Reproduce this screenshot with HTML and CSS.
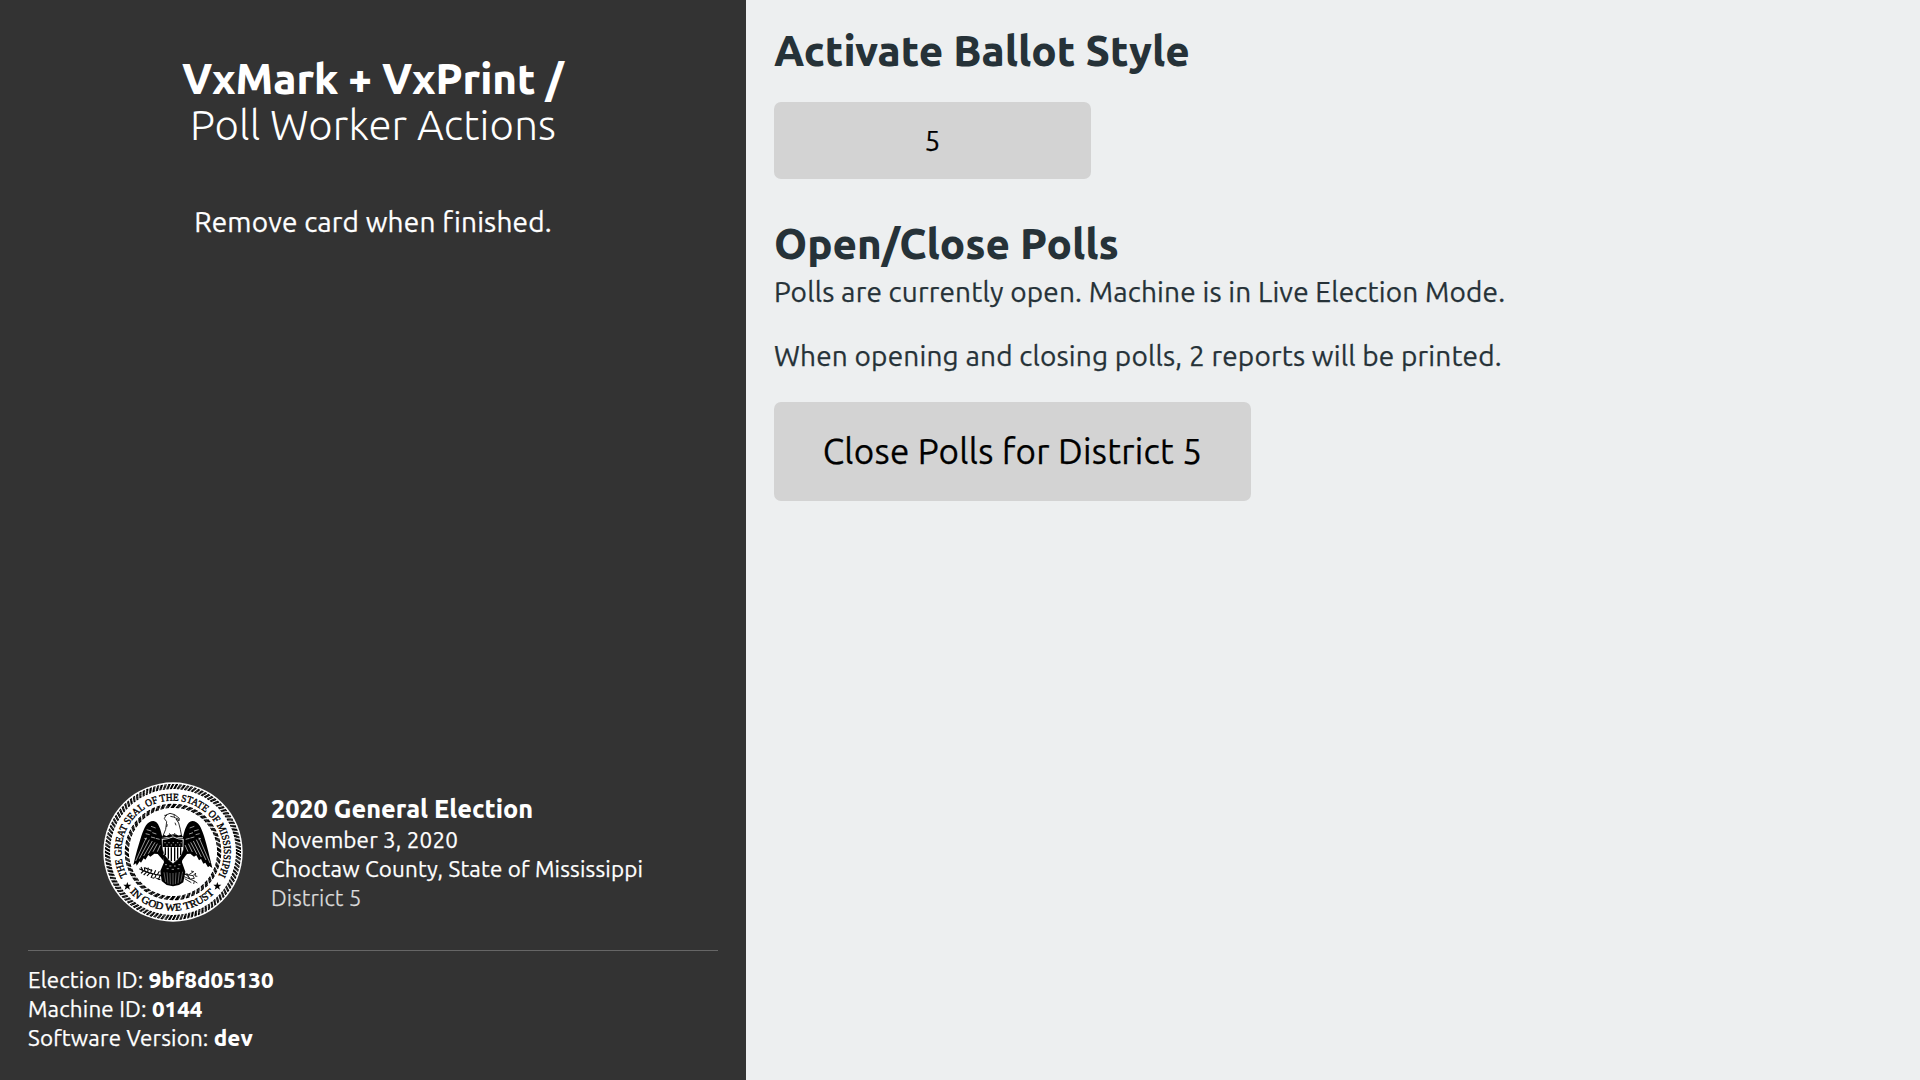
FILE: index.html
```
<!DOCTYPE html>
<html lang="en">
<head>
<meta charset="utf-8">
<title>VxMark + VxPrint</title>
<link rel="stylesheet" href="styles.css">
</head>
<body>
<div class="screen">
  <aside class="sidebar">
    <header class="intro">
      <h1 class="title">VxMark + VxPrint /<br><span class="light">Poll Worker Actions</span></h1>
      <p class="text">Remove card when finished.</p>
    </header>
    <footer class="footer">
      <section class="election">
        <svg class="seal" viewBox="24 21 420 420" role="img" aria-label="Seal of Mississippi">
          <defs>
            <path id="arc-top" d="M97 303A154 154 0 1 1 369 303"/>
            <path id="arc-bottom" d="M104 351A176 176 0 0 0 362 351"/>
          </defs>
          <circle cx="234" cy="231" r="209" fill="#fff"/>
          <g class="rope rope-outer">
            <circle cx="234" cy="231" r="190.500" pathLength="1120" stroke-dashoffset="0"/>
            <circle cx="234" cy="231" r="193.500" pathLength="1120" stroke-dashoffset="-1.500"/>
            <circle cx="234" cy="231" r="196.500" pathLength="1120" stroke-dashoffset="-3"/>
            <circle cx="234" cy="231" r="199.500" pathLength="1120" stroke-dashoffset="-4.500"/>
            <circle cx="234" cy="231" r="202.500" pathLength="1120" stroke-dashoffset="-6"/>
          </g>
          <g class="rope rope-inner">
            <circle cx="234" cy="231" r="134" pathLength="540" stroke-dashoffset="0"/>
            <circle cx="234" cy="231" r="137" pathLength="540" stroke-dashoffset="-1.500"/>
            <circle cx="234" cy="231" r="140" pathLength="540" stroke-dashoffset="-3"/>
            <circle cx="234" cy="231" r="143" pathLength="540" stroke-dashoffset="-4.500"/>
          </g>
          <text class="motto"><textPath href="#arc-top" textLength="632" lengthAdjust="spacingAndGlyphs">THE GREAT SEAL OF THE STATE OF MISSISSIPPI</textPath></text>
          <text class="motto"><textPath href="#arc-bottom" textLength="284" lengthAdjust="spacingAndGlyphs">IN GOD WE TRUST</textPath></text>
          <path d="M97 321l3 8 9 0-7 6 3 9-8-5-8 5 3-9-7-6 9 0z"/>
          <path d="M367 321l3 8 9 0-7 6 3 9-8-5-8 5 3-9-7-6 9 0z"/>
          <!-- wings -->
          <path d="M203 192C198 165 190 138 175 138C156 138 148 158 139 183C130 212 122 240 115 270L123 265L125 272L134 259L138 263L146 250L151 254L160 240L166 245L178 236L188 237L206 258Z"/>
          <path d="M263 192C268 165 277 138 292 138C310 138 319 158 327 183C336 212 344 246 352 279L343 273L339 277L331 263L325 266L318 252L312 256L304 241L297 245L286 236L276 237L260 258Z"/>
          <g class="feathers">
            <path d="M122 258L154 188M133 251L163 194M146 243L172 198M160 236L180 202M174 230L187 206M187 230L196 210"/>
            <path d="M345 264L312 188M333 255L304 194M319 246L295 198M306 238L287 202M292 231L280 206M279 230L270 210"/>
            <path d="M152 176l12 3M155 164l14 4M168 186l12 3M172 173l12 4M168 154l14 5M182 190l12 3M148 190l8 2"/>
            <path d="M314 176l-12 3M311 164l-14 4M298 186l-12 3M294 173l-12 4M298 154l-14 5M284 190l-12 3M318 190l-8 2"/>
          </g>
          <!-- head and neck -->
          <path class="outline" d="M202 188L212 163L215 140L208 131L213 120L225 115L239 119L253 130L252 138L243 132L251 144L256 163L260 185L234 179Z"/>
          <path class="line" d="M208 121l8 0M226 124l10 2M238 119l-1 8 15 6M217 148l-2 8M240 143l3 8M223 175l5 6M240 174l-4 7"/>
          <path d="M200 187l6-8 9 5 8-6 10 4 10-4 7 5 9-4 6 8z"/>
          <!-- body and tail -->
          <path d="M203 240L263 240L261 262L271 290L265 322L252 330L234 334L215 330L200 318L196 288L207 262Z"/>
          <path class="flecks" d="M210 269h6M223 273h6M237 273h5M250 269h6M215 281h6M230 283h7M247 281h6"/>
          <path class="tail" d="M207 292L212 321M216 292L219 326M225 294L226 328M234 294V329M243 293L241 327M253 291L249 325M263 290L257 320"/>
          <!-- shield -->
          <path class="shield" d="M199 191L216 190L234 183L251 190L267 191L266 223Q260 249 234 266Q208 249 202 223Z"/>
          <path d="M203 194L217 193L234 187L250 193L263 194L263 216H203Z"/>
          <path class="bars" d="M211 217V240M220 217V251M229 217V259M239 217V259M248 217V251M257 217V240"/>
          <path class="flecks" d="M208 203h4M220 203h4M233 203h4M246 203h4M257 203h3M214 210h4M227 210h4M240 210h4M252 210h4"/>
          <!-- branch and arrows -->
          <path class="branch" d="M133 281Q157 295 204 302M143 285l-5-9M150 289l-2-12M158 292l2-14M167 295l3-12M177 297l5-11M187 299l6-10M145 288l-7 7M154 292l-8 8M163 295l-7 8M173 298l-5 10M183 300l-4 10M195 302l-5 12M162 283l10 4M150 278l9 5M168 307l9 3M184 310l12 4"/>
          <path class="line" d="M262 297L294 302L302 294L300 303L307 304M265 304L298 318L296 327M269 311L289 323M280 300L296 290L288 288M298 318L307 324M265 291L287 312M275 294l9 18M294 302l4 8-10 2"/>
        </svg>
        <div class="details">
          <h5 class="election-title">2020 General Election</h5>
          <p class="small">November 3, 2020<br>Choctaw County, State of Mississippi<br><span class="light district">District 5</span></p>
        </div>
      </section>
      <p class="small machine">Election ID: <strong>9bf8d05130</strong><br>Machine ID: <strong>0144</strong><br>Software Version: <strong>dev</strong></p>
    </footer>
  </aside>
  <main class="main">
    <section class="section">
      <h1 class="heading">Activate Ballot Style</h1>
      <button class="button ballot-style">5</button>
    </section>
    <section class="section">
      <h1 class="heading heading-tight">Open/Close Polls</h1>
      <p class="text para">Polls are currently open. Machine is in Live Election Mode.</p>
      <p class="text para">When opening and closing polls, 2 reports will be printed.</p>
      <button class="button large">Close Polls for District 5</button>
    </section>
  </main>
</div>
</body>
</html>
```
FILE: styles.css
```
* { box-sizing: border-box; }
body {
  margin: 0;
  background: #edeff0;
  color: #263238;
  font-family: Ubuntu, "Noto Sans", sans-serif;
  font-size: 28px;
  font-weight: 400;
  line-height: 1.3;
  letter-spacing: .17px;
  -webkit-text-stroke: .25px;
}
h1, h5, p { margin: 0; }
.screen { display: flex; height: 100vh; overflow: hidden; }
.sidebar {
  display: flex;
  flex: 0 0 746px;
  flex-direction: column;
  justify-content: space-between;
  padding: 56px 28px 28px;
  background: #333;
  color: #fff;
}
.intro { display: flex; flex-direction: column; gap: 56px; text-align: center; }
.title, .heading, .election-title, .small strong { font-weight: 800; letter-spacing: 0; -webkit-text-stroke: 0; }
.title, .heading { font-size: 42px; line-height: 1.1; }
.title { letter-spacing: -.05px; }
.title .light, .light { font-weight: 300; letter-spacing: .13px; }
.small { font-size: 22.4px; letter-spacing: .16px; }
.election { display: flex; align-items: center; justify-content: center; gap: 28px; padding-bottom: 28px; }
.details { padding-top: 1px; }
.election-title { margin-bottom: -1px; padding-top: 1px; font-size: 25.2px; }
.district { color: #ddd; }
.machine { padding-top: 14px; border-top: 1px solid #666; }
.main { flex: 1; padding: 28px; }
.section { display: flex; flex-direction: column; align-items: flex-start; margin-bottom: 42px; }
.heading { margin-bottom: 28px; }
.heading-tight { margin-bottom: 7px; }
.para { margin-bottom: 27.5px; }
.button {
  border: 0;
  border-radius: 7px;
  background: #d3d3d3;
  color: #000;
  font: inherit;
}
.ballot-style { width: 317px; height: 77px; padding-top: 3px; }
.large { width: 477px; height: 99px; font-size: 35px; letter-spacing: .26px; }

.seal { flex: none; width: 140px; height: 140px; }
.rope circle { fill: none; stroke: #000; stroke-width: 3.4; }
.rope-outer circle { stroke-dasharray: 6.5 3.5; }
.rope-inner circle { stroke-dasharray: 6.8 3.2; }
.motto { font: 31px "Liberation Serif", serif; letter-spacing: 0; -webkit-text-stroke: 0; stroke: #000; stroke-width: 1.2; }
.outline { fill: #fff; stroke: #000; stroke-width: 2.5; }
.line, .branch { fill: none; stroke: #000; stroke-width: 2.5; }
.branch { stroke-width: 3.4; }
.feathers, .flecks, .tail { fill: none; stroke: #fff; stroke-width: 1.8; }
.tail { stroke-width: 1.1; }
.shield { fill: #fff; stroke: #000; stroke-width: 2; }
.bars { stroke: #000; stroke-width: 4; }
```
